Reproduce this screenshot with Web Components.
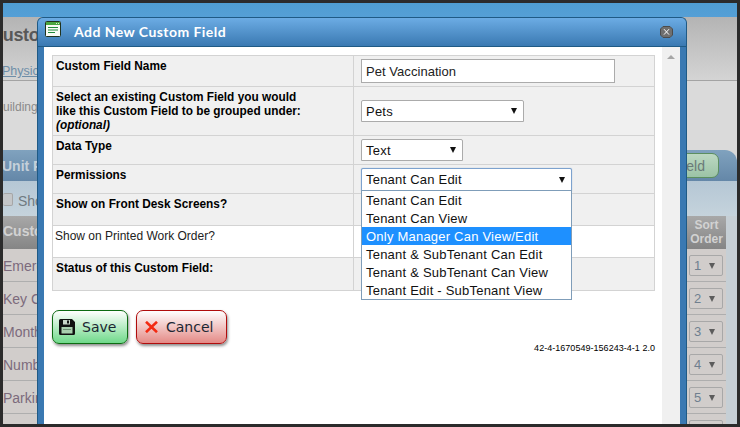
<!DOCTYPE html>
<html>
<head>
<meta charset="utf-8">
<title>Add New Custom Field</title>
<style>
    html, body { margin: 0; height: 100%; }
    body { background: #2b2b2b; overflow: hidden; font-family: "Liberation Sans", Arial, sans-serif; }
</style>
</head>
<body>
<app-screen>
    <app-backdrop></app-backdrop>
    <field-dialog title="Add New Custom Field">
        <field-row label="Custom Field Name" height="30">
            <text-box value="Pet Vaccination"></text-box>
        </field-row>
        <field-row height="48" top="13">
            <span slot="label">Select an existing Custom Field you would<br>like this Custom Field to be grouped under:<br><em>(optional)</em></span>
            <fake-select value="Pets" width="163"></fake-select>
        </field-row>
        <field-row label="Data Type" height="28">
            <fake-select value="Text" width="102"></fake-select>
        </field-row>
        <field-row label="Permissions" height="28">
            <fake-select value="Tenant Can Edit" width="211" focused></fake-select>
        </field-row>
        <field-row label="Show on Front Desk Screens?" height="31"></field-row>
        <field-row label="Show on Printed Work Order?" height="31" plain></field-row>
        <field-row label="Status of this Custom Field:" height="32"></field-row>
        <drop-list slot="overlay" selected="2">
            <span>Tenant Can Edit</span>
            <span>Tenant Can View</span>
            <span>Only Manager Can View/Edit</span>
            <span>Tenant &amp; SubTenant Can Edit</span>
            <span>Tenant &amp; SubTenant Can View</span>
            <span>Tenant Edit - SubTenant View</span>
        </drop-list>
        <action-button slot="actions" kind="save">Save</action-button>
        <action-button slot="actions" kind="cancel">Cancel</action-button>
    </field-dialog>
</app-screen>

<script>
// Frame of the screenshot: dark edge round everything.
class AppScreen extends HTMLElement {
    constructor() {
        super();
        this.attachShadow({ mode: 'open' }).innerHTML = `
        <style>
            :host { display: block; position: relative; margin: 3px; height: 421px; width: 734px; overflow: hidden; background: #d8d8d8; }
        </style>
        <slot></slot>`;
    }
}

// The dimmed page behind the dialog.
class AppBackdrop extends HTMLElement {
    constructor() {
        super();
        const rows = ['Emerg', 'Key C', 'Month', 'Numb', 'Parkin', 'Pets'];
        this.attachShadow({ mode: 'open' }).innerHTML = `
        <style>
            :host { display: block; color: #6f6f6f; font-family: "Liberation Sans", Arial, sans-serif; }
            .strip { height: 14px; background: linear-gradient(#4f9dd2, #559fd6); }
            .head { height: 64px; box-sizing: border-box; border-bottom: 1px solid #a3a3a3; background: linear-gradient(#b4b4b4, #d4d4d4); }
            h1 { margin: 0 0 0 -13px; padding-top: 2px; font: bold 18px/32px "Liberation Sans", Arial, sans-serif; letter-spacing: -0.3px; color: #585858; white-space: nowrap; }
            .head a { display: block; margin: 12px 0 0 -1px; color: #6f8ea8; font-size: 12.5px; line-height: 16px; text-decoration: underline; }
            .crumb { height: 69px; box-sizing: border-box; padding: 19px 0 0 0; margin-left: -8px; font-size: 12px; color: #8a8a8a; background: #dadada; }
            .tab { height: 31px; display: flex; justify-content: space-between; align-items: center; background: linear-gradient(#80a2be, #6487a8); border-radius: 0 12px 0 0; }
            .tab b { font-size: 14px; margin-left: -1px; color: #c5d0da; }
            .tab .add { width: 59px; height: 25px; margin-right: 18px; box-sizing: border-box; display: flex; align-items: center; justify-content: flex-end; padding-right: 13px; font-size: 14px; white-space: nowrap; color: #6a7a78; border: 1px solid #5c8f60; border-radius: 7px; background: linear-gradient(#bcd8c2, #9cc3a6); }
            .tools { height: 35px; box-sizing: border-box; padding-top: 12px; background: linear-gradient(#b5c7d5, #c5d3dc); font-size: 14px; color: #707a80; display: flex; gap: 5px; }
            .tools i { width: 9px; height: 11px; border: 1px solid #a6a6a6; border-left: 0; border-radius: 2px; background: #c4c6c8; }
            .table { display: grid; grid-template-columns: 1fr 39px 11px; }
            .th { height: 33px; box-sizing: border-box; background: linear-gradient(#a8a8a8, #858585); color: #d2d2d2; font-weight: bold; font-size: 12px; line-height: 14px; text-align: center; padding-top: 2px; }
            .th.first { text-align: left; font-size: 14px; padding-top: 8px; }
            .gutter { background: #c6cfd5; grid-row: 1 / span 7; grid-column: 3; }
            .td { height: 33px; box-sizing: border-box; border-bottom: 1px solid #aeaeae; background: #d1cdcb; font-size: 14px; color: #7c6a7c; padding-top: 9px; }
            .td span.clip { display: block; width: 34px; overflow: hidden; white-space: nowrap; }
            .sort { display: flex; align-items: flex-start; padding: 6px 0 0 2px; }
            .sort span { width: 34px; height: 21px; box-sizing: border-box; border: 1px solid #a8a8a8; border-radius: 2px; display: flex; align-items: center; justify-content: space-between; padding: 0 7px 0 4px; font-size: 13px; color: #6f7f8f; }
            .sort span::after { content: ''; border: 3.5px solid transparent; border-top: 6px solid #5c5c5c; border-bottom: 0; }
        </style>
        <div class="strip"></div>
        <div class="head"><h1>Custo</h1><a>Physic</a></div>
        <div class="crumb">Building</div>
        <div class="tab"><b>Unit P</b><span class="add">Field</span></div>
        <div class="tools"><i></i>Sho</div>
        <div class="table">
            <div class="th first">Custo</div><div class="th">Sort<br>Order</div><div class="gutter"></div>
            ${rows.map((name, i) => `<div class="td"><span class="clip">${name}</span></div><div class="td sort"><span>${i + 1}</span></div>`).join('')}
        </div>`;
    }
}

// Blue window over the page.
class FieldDialog extends HTMLElement {
    constructor() {
        super();
        const title = this.getAttribute('title');
        this.removeAttribute('title');
        this.attachShadow({ mode: 'open' }).innerHTML = `
        <style>
            :host { display: flex; flex-direction: column; position: absolute; left: 34px; top: 14px; width: 650px; height: 420px; box-sizing: border-box; border: 1px solid #1f5a85; border-bottom: 0; border-radius: 6px 6px 0 0; background: #3a79b2; padding: 0 6px; color: #000; }
            header { height: 28px; flex: none; margin: 0 -6px; padding: 0 13px 0 7px; display: flex; align-items: center; background: linear-gradient(#6cace4, #3a79b2); border-radius: 5px 5px 0 0; border-bottom: 1px solid #1f5a85; }
            header svg.logo { flex: none; margin-top: -6px; }
            header h2 { margin: -2px 0 0 13px; flex: 1; font: bold 14px "Lato", "DejaVu Sans", sans-serif; color: #fff; letter-spacing: 0.45px; }
            .body { flex: 1; position: relative; display: flex; background: #fff; }
            .main { flex: 1; padding: 8px 7px 0 8px; min-width: 0; }
            .table { border-top: 1px solid #d3d3d3; }
            .bar { width: 18px; flex: none; background: #f0f0f0; display: flex; justify-content: center; padding-top: 8px; box-sizing: border-box; }
            .bar i { border: 4px solid transparent; border-bottom: 4px solid #a6a6a6; border-top: 0; width: 0; height: 0; }
            .actions { display: flex; gap: 8px; margin-top: 19px; }
            .version { margin-top: -1px; text-align: right; font-size: 9px; line-height: 10px; letter-spacing: 0.03px; }
            ::slotted(drop-list) { position: absolute; left: 317px; top: 143px; }
        </style>
        <header>
            <svg class="logo" width="16" height="16" viewBox="0 0 16 16">
                <rect x="0.5" y="0.5" width="15" height="15" rx="1" fill="#f8fbf5" stroke="#20331f"/>
                <rect x="1" y="1" width="14" height="3" fill="#4aa63f"/>
                <path d="M11 2.5h1M13 2.5h1" stroke="#d8f0d0"/>
                <path d="M3 6.5h10M3 9h10M3 11.5h7" stroke="#1f8a3a"/>
            </svg>
            <h2>${title}</h2>
            <svg width="13" height="12" viewBox="0 0 13 12">
                <path d="M3 0.5h7l2.5 2.5v6L10 11.5H3L0.5 9V3z" fill="#6f6f6f" stroke="#4c4c4c"/>
                <path d="M4 3.2l5 5.4M9 3.2l-5 5.4" stroke="#fff" stroke-width="1" fill="none"/>
            </svg>
        </header>
        <div class="body">
            <div class="main">
                <div class="table"><slot></slot></div>
                <div class="actions"><slot name="actions"></slot></div>
                <div class="version">42-4-1670549-156243-4-1 2.0</div>
            </div>
            <div class="bar"><i></i></div>
            <slot name="overlay"></slot>
        </div>`;
    }
}

// One row of the form: label on the left, control on the right.
class FieldRow extends HTMLElement {
    constructor() {
        super();
        const label = this.getAttribute('label') || '';
        const height = this.getAttribute('height');
        const top = this.getAttribute('top') || '3';
        const plain = this.hasAttribute('plain');
        this.attachShadow({ mode: 'open' }).innerHTML = `
        <style>
            :host { display: grid; grid-template-columns: 300px 1fr; height: ${height}px; width: 601px; background: ${plain ? '#fff' : '#f0f0f0'}; border: 1px solid #d3d3d3; border-top: 0; font: ${plain ? 'normal 12px' : 'bold 11.85px'}/14px "Liberation Sans", Arial, sans-serif; color: ${plain ? '#222' : '#000'}; }
            .label { padding: 3px 0 0 ${plain ? 2 : 3}px; }
            .control { border-left: 1px solid #d3d3d3; padding: ${top}px 0 0 7px; box-sizing: border-box; }
        </style>
        <div class="label"><slot name="label">${label}</slot></div>
        <div class="control"><slot></slot></div>`;
    }
}

class TextBox extends HTMLElement {
    constructor() {
        super();
        this.attachShadow({ mode: 'open' }).innerHTML = `
        <style>
            :host { display: block; width: 254px; height: 24px; box-sizing: border-box; border: 1px solid #ababab; background: #fff; font: 13px/24px "Liberation Sans", Arial, sans-serif; color: #222; padding-left: 4px; letter-spacing: 0.05px; }
        </style>
        ${this.getAttribute('value')}`;
    }
}

class FakeSelect extends HTMLElement {
    constructor() {
        super();
        const focused = this.hasAttribute('focused');
        this.attachShadow({ mode: 'open' }).innerHTML = `
        <style>
            :host { display: flex; align-items: center; justify-content: space-between; width: ${this.getAttribute('width')}px; height: ${focused ? 23 : 22}px; box-sizing: border-box; border: 1px solid ${focused ? '#7da2ce' : '#ababab'}; border-radius: 2px 2px 0 0; background: #fff; padding: 0 6px 0 4px; font: normal 13px "Liberation Sans", Arial, sans-serif; color: #111; letter-spacing: 0.22px; ${focused ? 'box-shadow: 0 0 1px #7da2ce;' : ''} }
            i { width: 0; height: 0; border: 3.5px solid transparent; border-top: 6px solid #111; border-bottom: 0; }
        </style>
        <span>${this.getAttribute('value')}</span><i></i>`;
    }
}

class DropList extends HTMLElement {
    constructor() {
        super();
        this.attachShadow({ mode: 'open' }).innerHTML = `
        <style>
            :host { display: flex; flex-direction: column; width: 211px; box-sizing: border-box; border: 1px solid #7f9db9; background: #fff; font: 13px/20px "Liberation Sans", Arial, sans-serif; color: #111; letter-spacing: 0.22px; }
            ::slotted(span) { display: block; height: 18px; padding-left: 4px; }
            ::slotted(.selected) { background: #1e90ff; color: #fff; }
        </style>
        <slot></slot>`;
    }
    connectedCallback() {
        setSelected(this);
    }
}

// Green / red button with its icon.
class ActionButton extends HTMLElement {
    constructor() {
        super();
        const save = this.getAttribute('kind') == 'save';
        const icon = save
            ? `<svg width="16" height="16" viewBox="0 0 16 16">
                <path d="M0 1.5A1.5 1.5 0 0 1 1.5 0H13l3 3v11.5a1.5 1.5 0 0 1-1.5 1.5h-13A1.5 1.5 0 0 1 0 14.5z" fill="#111"/>
                <rect x="4" y="1" width="7" height="4.5" fill="#c9d6c9"/><rect x="8" y="1.5" width="2" height="3" fill="#111"/>
                <rect x="2.5" y="8" width="11" height="6.5" fill="#a9cfae"/><path d="M4 10.5h8" stroke="#6f8f74"/>
               </svg>`
            : `<svg width="13" height="12" viewBox="0 0 13 12">
                <path d="M1 0.8l11 10.4M12 0.8L1 11.2" stroke="#f32a12" stroke-width="2.6" fill="none"/>
               </svg>`;
        this.attachShadow({ mode: 'open' }).innerHTML = `
        <style>
            :host { display: flex; align-items: center; height: 34px; box-sizing: border-box; width: ${save ? 76 : 91}px; gap: ${save ? 7 : 8}px; padding-left: ${save ? 6 : 8}px; border: 1px solid ${save ? '#0c6b12' : '#b00c0c'}; border-radius: 7px; background: ${save ? 'linear-gradient(#fff, #6fd98a)' : 'linear-gradient(#fff, #e48a86)'}; box-shadow: 1px 2px 3px rgba(0,0,0,0.45); font: 14px "DejaVu Sans", sans-serif; color: #1c2733; }
        </style>
        ${icon}<span><slot></slot></span>`;
    }
}

// Helper function.
function setSelected(el) {
    const index = parseInt(el.getAttribute('selected'));
    const options = el.querySelectorAll('span');
    if (options[index]) {
        options[index].classList.add('selected');
    }
}

customElements.define('app-screen', AppScreen);
customElements.define('app-backdrop', AppBackdrop);
customElements.define('field-dialog', FieldDialog);
customElements.define('field-row', FieldRow);
customElements.define('text-box', TextBox);
customElements.define('fake-select', FakeSelect);
customElements.define('drop-list', DropList);
customElements.define('action-button', ActionButton);
</script>
</body>
</html>
